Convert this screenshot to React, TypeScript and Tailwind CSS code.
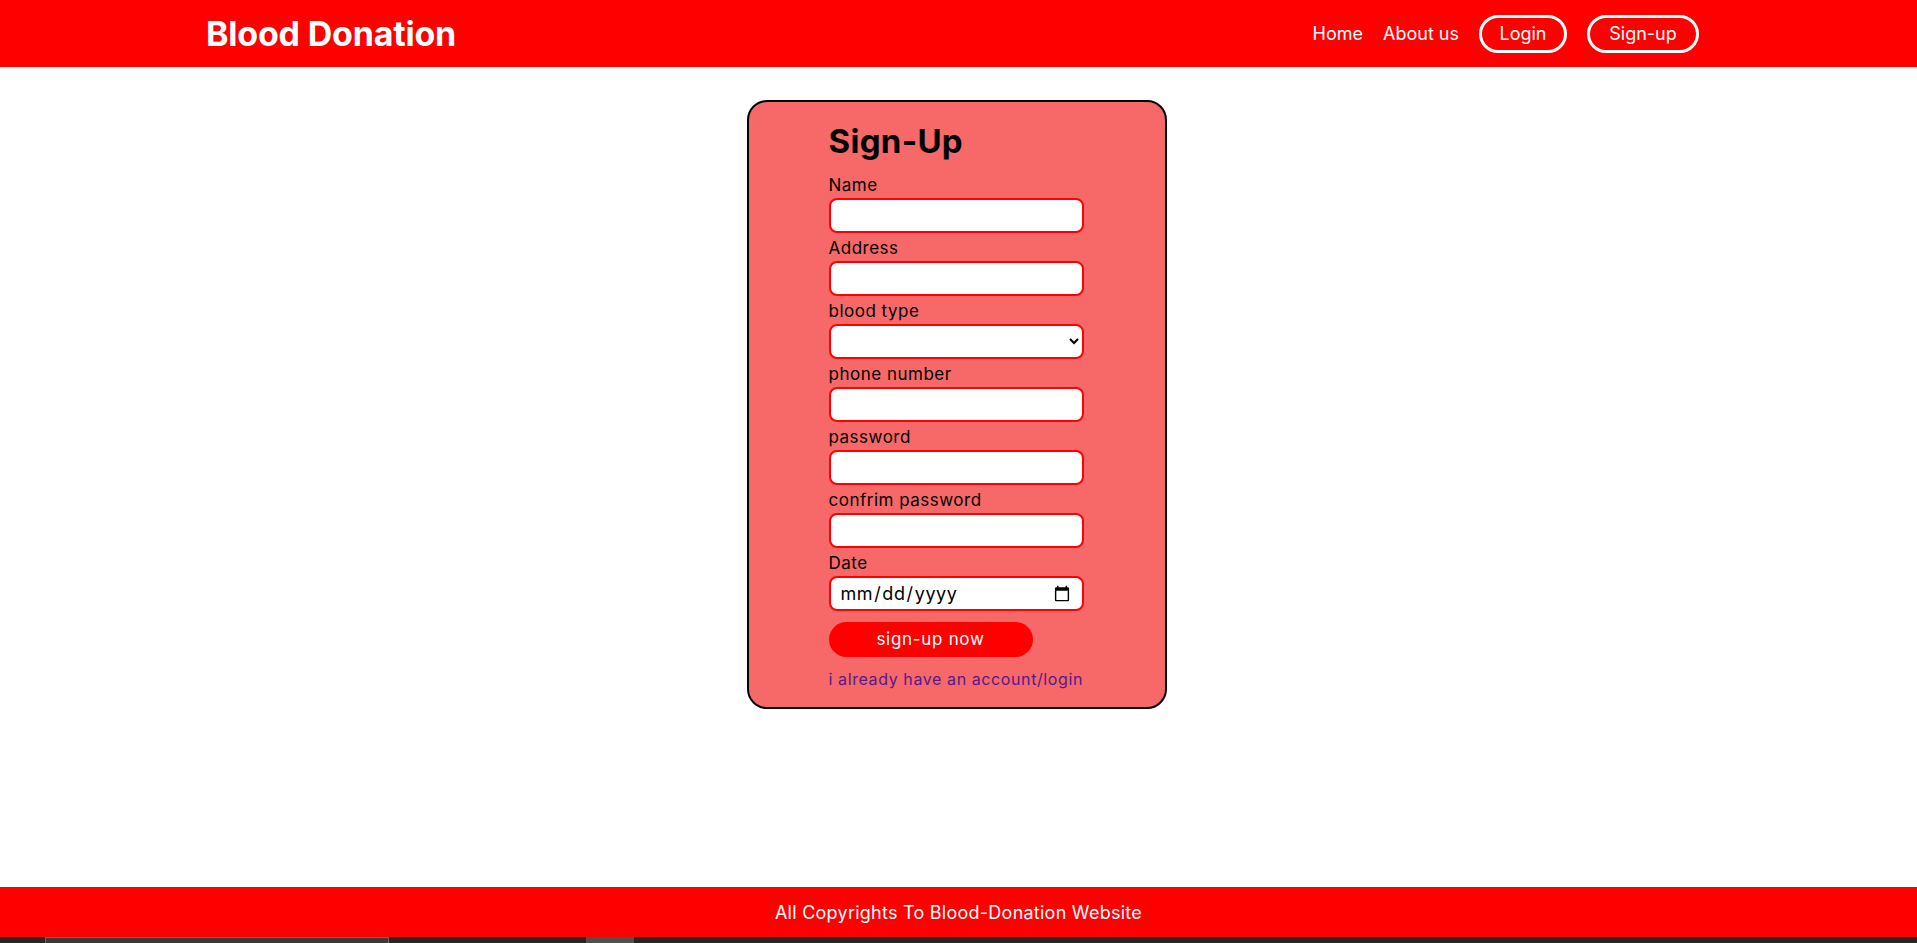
import React from 'react';

const fields = [
  { label: 'Name', type: 'text' },
  { label: 'Address', type: 'text' },
  { label: 'blood type', type: 'select' },
  { label: 'phone number', type: 'tel' },
  { label: 'password', type: 'password' },
  { label: 'confrim password', type: 'password' },
  { label: 'Date', type: 'date' },
];

export default function App() {
  return (
    <div className="min-h-screen flex flex-col bg-white font-['Inter',sans-serif] text-black">
      <header className="h-[67px] bg-[#ff0000] flex items-center justify-between pl-[206px] pr-[218px]">
        <h1 className="text-white text-[34px] font-bold leading-none tracking-[-0.2px]">Blood Donation</h1>
        <nav className="flex items-center gap-5 text-white text-[18px]">
          <a href="#" className="leading-6">Home</a>
          <a href="#" className="leading-6">About us</a>
          <a href="#" className="w-[88px] h-[38px] border-[3px] border-white rounded-full flex items-center justify-center">
            Login
          </a>
          <a href="#" className="w-[112px] h-[38px] border-[3px] border-white rounded-full flex items-center justify-center">
            Sign-up
          </a>
        </nav>
      </header>

      <main className="flex-1 flex justify-center pt-[33px] pr-[3px]">
        <div className="w-[420px] h-fit bg-[#f76868] border-2 border-black rounded-[20px] pt-[19px] pb-[16px]">
          <div className="w-[257px] mx-auto flex flex-col">
            <h2 className="text-[33px] font-bold leading-[40px] tracking-[0.3px] mb-[12px]">Sign-Up</h2>
            {fields.map((f, i) => (
              <div key={f.label} className={i === 0 ? 'flex flex-col' : 'flex flex-col mt-[3px]'}>
                <label className="text-[17px] leading-6 tracking-[0.5px] whitespace-nowrap">{f.label}</label>
                {f.type === 'select' ? (
                  <select className="mt-px w-[255px] h-[35px] bg-white border-2 border-[#ff0000] rounded-lg px-2 text-[16px]">
                    <option value=""></option>
                    <option>A+</option>
                    <option>A-</option>
                    <option>B+</option>
                    <option>B-</option>
                    <option>AB+</option>
                    <option>AB-</option>
                    <option>O+</option>
                    <option>O-</option>
                  </select>
                ) : (
                  <input
                    type={f.type}
                    className="mt-px w-[255px] h-[35px] bg-white border-2 border-[#ff0000] rounded-lg px-[9px] text-[18px] tracking-[0.6px]"
                  />
                )}
              </div>
            ))}
            <button className="mt-[11px] w-[204px] h-[35px] bg-[#ff0000] rounded-full text-white text-[17px] tracking-[0.7px]">
              sign-up now
            </button>
            <a href="#" className="mt-[10px] text-[#551a8b] text-[16px] leading-6 tracking-[0.6px] whitespace-nowrap">
              i already have an account/login
            </a>
          </div>
        </div>
      </main>

      <footer className="h-[50px] bg-[#ff0000] flex items-center justify-center">
        <p className="text-white text-[18px] tracking-[0.25px]">All Copyrights To Blood-Donation Website</p>
      </footer>
      <div className="h-[6px] bg-[#232826] flex">
        <div className="ml-[45px] w-[344px] bg-[#3a3a3a] border-t border-x border-[#6a6a6a]" />
        <div className="ml-[197px] w-[48px] bg-[#4e524f]" />
      </div>
    </div>
  );
}
